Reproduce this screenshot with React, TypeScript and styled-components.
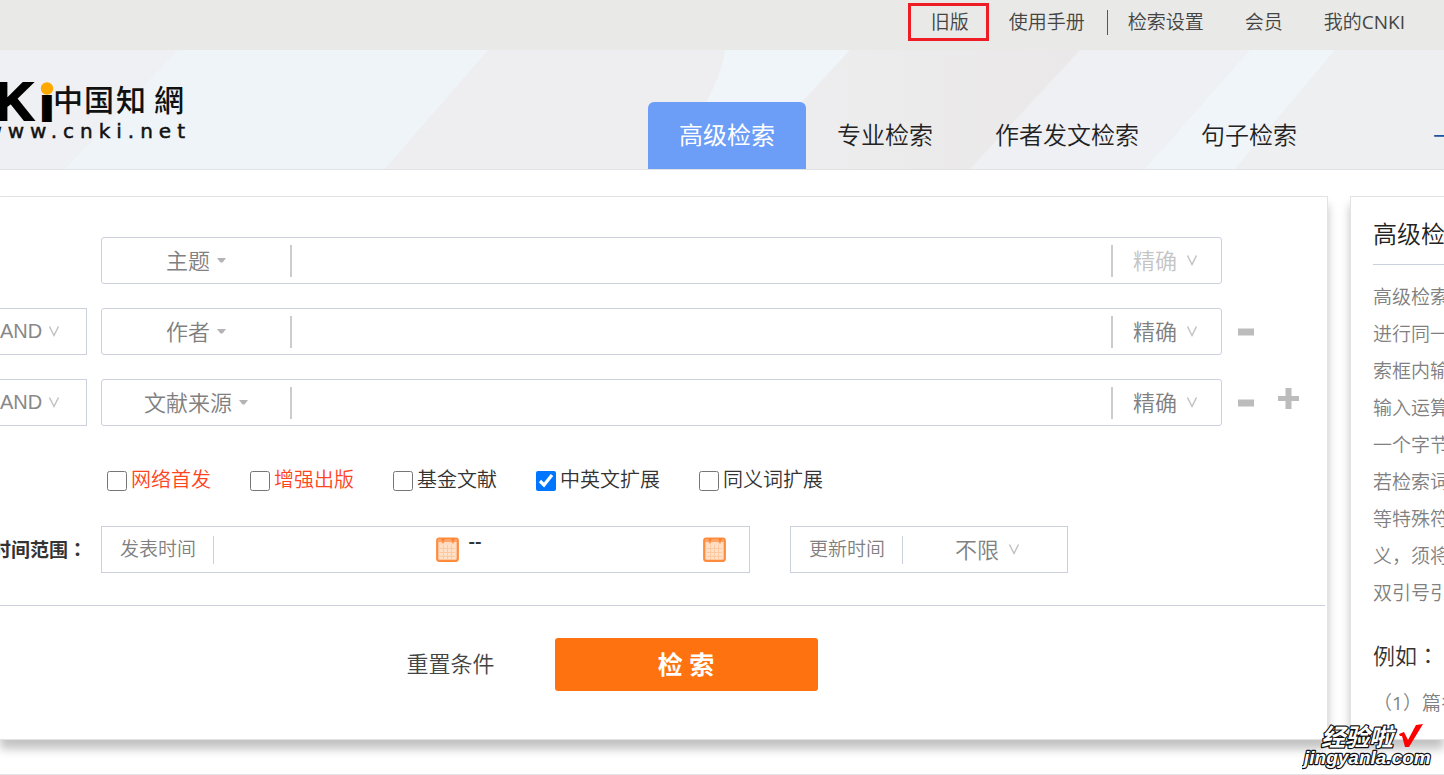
import React from "react";
import styled, { createGlobalStyle } from "styled-components";

const sans = `"Open Sans", "Noto Sans CJK SC", sans-serif`;

const GlobalStyle = createGlobalStyle`
  *, *::before, *::after { box-sizing: border-box; }
  html, body { margin: 0; padding: 0; }
  body {
    background: #fff;
    color: #333;
    font-family: ${sans};
    font-weight: 350;
    overflow-x: hidden;
  }
  button, input, select { font: inherit; color: inherit; }
`;

const Page = styled.div`
  position: relative;
  min-height: 100vh;
  overflow: hidden;
  display: flex;
  flex-direction: column;
`;

const TopBar = styled.nav`
  display: flex;
  justify-content: flex-end;
  align-items: center;
  height: 50px;
  padding: 0 39px 6px 0;
  background: #e9e9e7;
  font-size: 19px;
  line-height: 28px;
`;

const TopLink = styled.a<{ $marked?: boolean; $spaced?: boolean }>`
  color: #444;
  text-decoration: none;
  white-space: nowrap;
  margin-left: ${(p) => (p.$spaced ? 41 : 0)}px;
  ${(p) =>
    p.$marked &&
    `border: 3px solid #ee1c25; padding: 2px 17px 2px 20px; height: 38px; margin-right: 20px;`}
`;

const TopDivider = styled.span`
  width: 1px;
  height: 25px;
  margin: 0 20px 0 22px;
  background: #555;
`;

const Latin = styled.span`
  font-weight: 400;
`;

const Header = styled.header`
  position: relative;
  display: flex;
  align-items: flex-end;
  height: 120px;
  border-bottom: 1px solid #e0e2e4;
  background: #eeeff2;
`;

const HeaderArt = styled.svg`
  position: absolute;
  inset: 0;
  width: 100%;
  height: 100%;
`;

const LogoLink = styled.a`
  position: relative;
  align-self: flex-start;
  flex: none;
  margin-top: 26px;
  line-height: 0;
`;

const Tabs = styled.div`
  position: relative;
  display: flex;
  margin-left: auto;
`;

const Tab = styled.button<{ $active?: boolean }>`
  height: 67px;
  padding: 0 31px 2px;
  border: 0;
  border-radius: 6px 6px 0 0;
  background: ${(p) => (p.$active ? "#6c9df7" : "transparent")};
  color: ${(p) => (p.$active ? "#fff" : "#222")};
  font-size: 24px;
  line-height: 36px;
  font-weight: ${(p) => (p.$active ? 400 : 350)};
  white-space: nowrap;
`;

const OneBoxLink = styled.a`
  position: relative;
  width: 11px;
  margin-left: 105px;
  overflow: hidden;
  color: #1b55a5;
  font-size: 24px;
  line-height: 67px;
  text-decoration: none;
`;

const Main = styled.main`
  display: flex;
  gap: 22px;
  padding: 26px 0 34px;
`;

const Panel = styled.section`
  border: 1px solid #e3e3e5;
  box-shadow: 0 9px 9px rgba(0, 0, 0, 0.24);
  background: #fff;
`;

const FormPanel = styled(Panel)`
  flex: 1;
  min-width: 0;
  height: 544px;
  border-left: 0;
  padding-top: 40px;
`;

const FormRow = styled.div`
  display: grid;
  grid-template-columns: 101px minmax(0, 1fr) 105px;
  margin-bottom: 24px;
`;

const LogicBox = styled.div`
  display: flex;
  align-items: center;
  gap: 5px;
  height: 47px;
  margin-right: 14px;
  border: 1px solid #cbd0dc;
  border-left: 0;
  color: #888;
  font-family: "Liberation Sans", sans-serif;
  font-weight: 400;
  font-size: 20px;
`;

const Field = styled.div`
  display: flex;
  align-items: center;
  height: 47px;
  border: 1px solid #cbd0dc;
  border-radius: 3px;
`;

const Slot = styled.label<{ $width: number; $gap: number; $start?: number; $muted?: boolean }>`
  display: flex;
  align-items: center;
  justify-content: ${(p) => (p.$start ? "flex-start" : "center")};
  gap: ${(p) => p.$gap}px;
  flex: none;
  width: ${(p) => p.$width}px;
  padding-left: ${(p) => p.$start || 0}px;
  color: ${(p) => (p.$muted ? "#c4c4c4" : "#808080")};
  font-size: 22px;
`;

const Select = styled.select`
  appearance: none;
  padding: 0 0 2px;
  border: 0;
  outline: 0;
  background: transparent;
  line-height: 32px;
`;

const TextInput = styled.input`
  flex: 1;
  min-width: 0;
  height: 40px;
  padding: 0 10px;
  border: 0;
  outline: 0;
  background: transparent;
  font-size: 20px;
`;

const Bar = styled.span<{ $thin?: boolean }>`
  flex: none;
  width: ${(p) => (p.$thin ? 1 : 2)}px;
  height: ${(p) => (p.$thin ? 28 : 32)}px;
  background: ${(p) => (p.$thin ? "#cbd0dc" : "#cccccc")};
`;

const RowActions = styled.div`
  display: flex;
  align-items: center;
  gap: 24px;
  padding-left: 16px;
`;

const IconButton = styled.button`
  display: flex;
  padding: 0;
  border: 0;
  background: transparent;
`;

const Checks = styled.div`
  display: flex;
  gap: 39px;
  padding: 15px 0 0 107px;
`;

const CheckLabel = styled.label<{ $hot?: boolean }>`
  display: flex;
  align-items: center;
  gap: 4px;
  color: ${(p) => (p.$hot ? "#ff4422" : "#333")};
  font-size: 20px;
  line-height: 30px;
  white-space: nowrap;
`;

const CheckBox = styled.input`
  width: 20px;
  height: 20px;
  margin: 2px 0 0;
`;

const DateRow = styled.div`
  display: flex;
  padding: 31px 0 32px;
`;

const DateTitle = styled.div`
  display: flex;
  justify-content: flex-end;
  align-items: center;
  width: 101px;
  padding: 0 14px 2px 0;
  font-size: 19px;
  font-weight: 700;
  white-space: nowrap;
`;

const Colon = styled.span`
  font-family: "Noto Sans CJK TC", sans-serif;
`;

const DateField = styled(Field)<{ $width: number }>`
  width: ${(p) => p.$width}px;
  border-radius: 0;
  & + & { margin-left: 40px; }
`;

const DateLabel = styled.label`
  padding: 0 17px 4px 18px;
  color: #808080;
  font-size: 19px;
  white-space: nowrap;
`;

const Dashes = styled.span`
  align-self: flex-start;
  margin-left: 10px;
  font-size: 20px;
  line-height: 28px;
  font-weight: 600;
`;

const EndGap = styled.span`
  width: 23px;
`;

const Actions = styled.div`
  display: flex;
  justify-content: center;
  align-items: center;
  gap: 60px;
  margin-right: 2px;
  padding: 32px 101px 0 0;
  border-top: 1px solid #cbd0dc;
`;

const ResetButton = styled.button`
  padding: 0 0 6px;
  border: 0;
  background: transparent;
  color: #444;
  font-size: 22px;
`;

const SearchButton = styled.button`
  width: 263px;
  height: 53px;
  padding: 0 0 4px;
  border: 0;
  border-radius: 3px;
  background: #ff7210;
  color: #fff;
  font-size: 25px;
  font-weight: 700;
`;

const HelpPanel = styled(Panel)`
  flex: 0 0 94px;
  min-width: 0;
  height: 544px;
  padding: 18px 0 0 22px;
  border-right: 0;
  white-space: nowrap;
`;

const HelpTitle = styled.h2`
  margin: 0 0 14px;
  padding-bottom: 11px;
  border-bottom: 1px solid #cbd0dc;
  color: #222;
  font-size: 24px;
  line-height: 38px;
  font-weight: 350;
`;

const HelpLine = styled.span`
  display: block;
`;

const HelpText = styled.p`
  margin: 0;
  color: #808080;
  font-size: 19px;
  line-height: 37px;
`;

const HelpExample = styled.h3`
  margin: 23px 0 11px;
  color: #333;
  font-size: 22px;
  line-height: 38px;
  font-weight: 350;
`;

const Foot = styled.footer`
  border-top: 1px solid #e3e3e5;
`;

const Watermark = styled.svg`
  position: absolute;
  right: 10px;
  top: 720px;
`;

const Chevron = () => (
  <svg width="12" height="14" viewBox="0 0 12 14" fill="none" stroke="#c0c0c0" strokeWidth="1.4" aria-hidden="true">
    <path d="M1.5 1.5L6 10.5L10.5 1.5" />
  </svg>
);

const Caret = () => (
  <svg width="9" height="5" viewBox="0 0 9 5" aria-hidden="true">
    <path d="M0 0H9L5.5 4.5H3.5Z" fill="#b4b4b4" />
  </svg>
);

const Calendar = () => (
  <svg width="23" height="25" viewBox="0 0 23 25" aria-hidden="true">
    <rect x="1.2" y="1.5" width="20.6" height="22.3" rx="2" fill="#ffdcc0" stroke="#ff8b3c" strokeWidth="2.2" />
    <path d="M2 2H21V5H18.5L17 7L15 5H8.5L7 7L5 5H2Z" fill="#ffa468" />
    <path d="M5 1.5H9L7 5.5ZM15 1.5H19L17 5.5Z" fill="#ff7f2a" />
    <path d="M4 8H19V22H4Z" fill="#ffe0c8" />
    <path d="M4 11.5H19M4 15.5H19M4 19.5H19M7.5 8V22M11.5 8V22M15.5 8V22" stroke="#ffc9a0" strokeWidth="1" />
  </svg>
);

const Minus = () => (
  <svg width="16" height="8" viewBox="0 0 16 8" aria-hidden="true">
    <path d="M0 0.5H16V7.5H0Z" fill="#bcbcbc" />
  </svg>
);

const Plus = () => (
  <svg width="21" height="30" viewBox="0 0 21 30" aria-hidden="true">
    <path d="M7.5 0H13.5V8H21V13H13.5V21H7.5V13H0V8H7.5Z" fill="#bcbcbc" />
  </svg>
);

const Logo = () => (
  <svg width="190" height="70" viewBox="0 0 190 70" role="img" aria-label="CNKI">
    <text x="-5" y="44" fontFamily="Liberation Sans, sans-serif" fontWeight="700" fontSize="54" fill="#000" stroke="#000" strokeWidth="2">K</text>
    <text x="41" y="44" fontFamily="Liberation Sans, sans-serif" fontWeight="700" fontSize="42" fill="#000" stroke="#000" strokeWidth="4">ı</text>
    <circle cx="47" cy="12.5" r="6.2" fill="#ffa800" />
    <g fontFamily="Noto Sans CJK TC, sans-serif" fontWeight="500" fontSize="30" fill="#111">
      <text x="53" y="35">中</text>
      <text x="84" y="35">国</text>
      <text x="116" y="35">知</text>
      <text x="154" y="35">網</text>
    </g>
    <text x="191" y="62" textAnchor="end" fontFamily="DejaVu Sans, sans-serif" fontSize="20" fontWeight="400" letterSpacing="6" stroke="#111" strokeWidth="0.5" fill="#111">www.cnki.net</text>
  </svg>
);

const rows = [
  { logic: "", name: "主题", muted: true, minus: false, plus: false },
  { logic: "AND", name: "作者", muted: false, minus: true, plus: false },
  { logic: "AND", name: "文献来源", muted: false, minus: true, plus: true },
];

const checks = [
  { text: "网络首发", hot: true, on: false },
  { text: "增强出版", hot: true, on: false },
  { text: "基金文献", hot: false, on: false },
  { text: "中英文扩展", hot: false, on: true },
  { text: "同义词扩展", hot: false, on: false },
];

const helpLines = ["高级检索", "进行同一", "索框内输", "输入运算", "一个字节", "若检索词", "等特殊符", "义，须将", "双引号引"];

export default function App() {
  return (
    <Page>
      <GlobalStyle />
      <TopBar>
        <TopLink href="#old" $marked>旧版</TopLink>
        <TopLink href="#manual">使用手册</TopLink>
        <TopDivider />
        <TopLink href="#settings">检索设置</TopLink>
        <TopLink href="#member" $spaced>会员</TopLink>
        <TopLink href="#my" $spaced>我的<Latin>CNKI</Latin></TopLink>
      </TopBar>
      <Header>
        <HeaderArt viewBox="0 0 1444 119" preserveAspectRatio="none" aria-hidden="true">
          <defs>
            <linearGradient id="beige" x1="0" y1="0" x2="1" y2="0">
              <stop offset="0" stopColor="#eeeef0" />
              <stop offset="1" stopColor="#eae8e8" />
            </linearGradient>
          </defs>
          <rect width="1444" height="119" fill="#eff0f3" />
          <path d="M178 0H488L385 119H65Z" fill="#eff4f8" />
          <path d="M488 0H725Q722 30 690 80L660 119H385Z" fill="#eeeef0" />
          <path d="M725 0H850L740 119H660L690 80Q722 30 725 0Z" fill="#eff5f9" />
          <path d="M850 0H1080L970 119H740Z" fill="url(#beige)" />
          <path d="M1250 0H1335L1235 119H1145Z" fill="#eff5f9" />
          <path d="M1335 0H1444V119H1235Z" fill="#edeff0" />
        </HeaderArt>
        <LogoLink href="#home"><Logo /></LogoLink>
        <Tabs>
          <Tab $active>高级检索</Tab>
          <Tab>专业检索</Tab>
          <Tab>作者发文检索</Tab>
          <Tab>句子检索</Tab>
        </Tabs>
        <OneBoxLink href="#onebox">一</OneBoxLink>
      </Header>
      <Main>
        <FormPanel>
          {rows.map((r) => (
            <FormRow key={r.name}>
              {r.logic ? (
                <LogicBox>
                  <Select aria-label={`${r.name} AND`}><option>{r.logic}</option></Select>
                  <Chevron />
                </LogicBox>
              ) : (
                <span />
              )}
              <Field>
                <Slot $width={188} $gap={6}>
                  <Select><option>{r.name}</option></Select>
                  <Caret />
                </Slot>
                <Bar />
                <TextInput type="text" aria-label={r.name} />
                <Bar />
                <Slot $width={108} $gap={8} $start={20} $muted={r.muted}>
                  <Select><option>精确</option></Select>
                  <Chevron />
                </Slot>
              </Field>
              <RowActions>
                {r.minus && <IconButton aria-label="-"><Minus /></IconButton>}
                {r.plus && <IconButton aria-label="+"><Plus /></IconButton>}
              </RowActions>
            </FormRow>
          ))}
          <Checks>
            {checks.map((c) => (
              <CheckLabel key={c.text} $hot={c.hot}>
                <CheckBox type="checkbox" defaultChecked={c.on} />
                {c.text}
              </CheckLabel>
            ))}
          </Checks>
          <DateRow>
            <DateTitle>时间范围<Colon>：</Colon></DateTitle>
            <DateField $width={649}>
              <DateLabel htmlFor="from">发表时间</DateLabel>
              <Bar $thin />
              <TextInput id="from" type="text" />
              <Calendar />
              <Dashes>--</Dashes>
              <TextInput type="text" aria-label="发表时间" />
              <Calendar />
              <EndGap />
            </DateField>
            <DateField $width={278}>
              <DateLabel htmlFor="updated">更新时间</DateLabel>
              <Bar $thin />
              <Slot $width={163} $gap={8} $start={52}>
                <Select id="updated"><option>不限</option></Select>
                <Chevron />
              </Slot>
            </DateField>
          </DateRow>
          <Actions>
            <ResetButton>重置条件</ResetButton>
            <SearchButton>检 索</SearchButton>
          </Actions>
        </FormPanel>
        <HelpPanel as="aside">
          <HelpTitle>高级检索</HelpTitle>
          <HelpText>
            {helpLines.map((l) => <HelpLine key={l}>{l}</HelpLine>)}
          </HelpText>
          <HelpExample>例如<Colon>：</Colon></HelpExample>
          <HelpText>（<Latin>1</Latin>）篇名</HelpText>
        </HelpPanel>
      </Main>
      <Foot />
      <Watermark width="132" height="52" viewBox="0 0 132 52">
        <g fill="#fff" stroke="#111" strokeWidth="2.4" strokeLinejoin="round" paintOrder="stroke" fontWeight="700">
          <text x="19" y="26" fontFamily="Noto Sans CJK SC, sans-serif" fontSize="24" fontStyle="italic">经验啦</text>
          <text x="2" y="44" fontFamily="Liberation Sans, sans-serif" fontSize="19" fontStyle="italic">jingyanla.com</text>
        </g>
        <path d="M97 14L102 12L106 20L114 5L121 4L107 27L103 27L100 16L98 16Z" fill="#f00" />
      </Watermark>
    </Page>
  );
}
